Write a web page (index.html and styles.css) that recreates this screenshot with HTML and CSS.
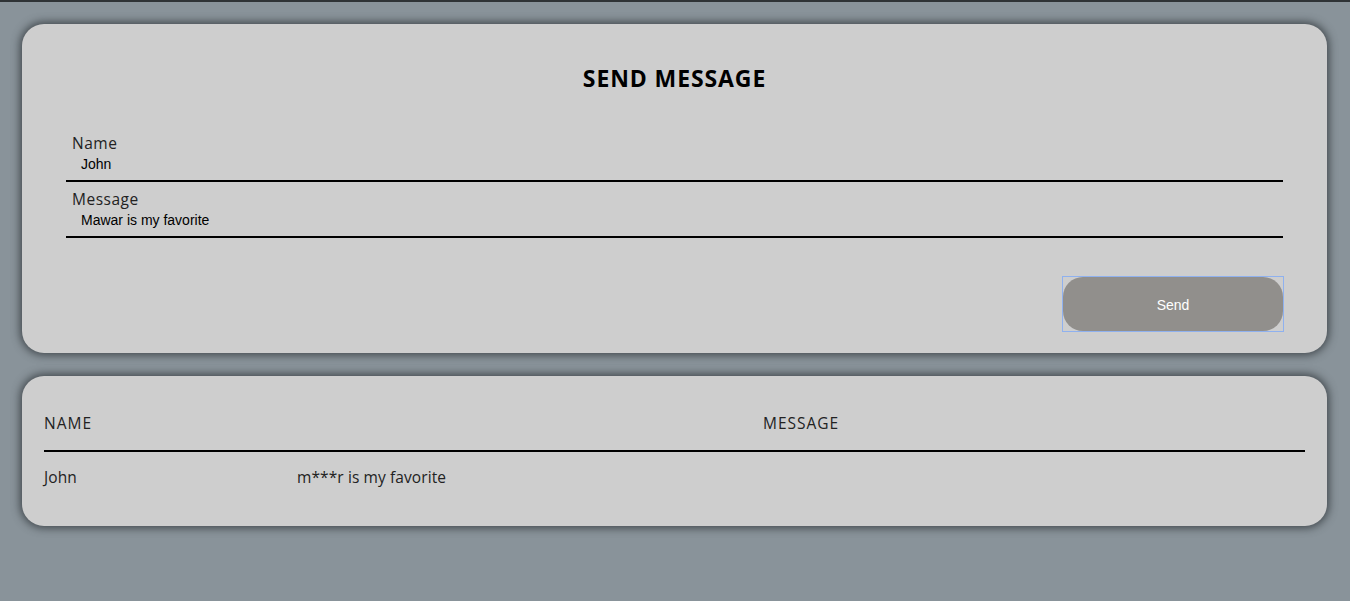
FILE: index.html
```html
<!DOCTYPE html>
<html>
<head>
<meta charset="utf-8">
<link rel="stylesheet" href="styles.css">
</head>
<body>
<div class="page">
  <section class="card form-card">
    <h1 class="title">SEND MESSAGE</h1>
    <div class="field">
      <label class="label">Name</label>
      <div class="value">John</div>
    </div>
    <div class="field">
      <label class="label">Message</label>
      <div class="value">Mawar is my favorite</div>
    </div>
    <div class="actions">
      <span class="focus-ring"><button class="send">Send</button></span>
    </div>
  </section>
  <section class="card list-card">
    <div class="thead">
      <div class="th">NAME</div>
      <div class="th">MESSAGE</div>
    </div>
    <div class="trow">
      <div class="td">John</div>
      <div class="td">m***r is my favorite</div>
    </div>
  </section>
</div>
</body>
</html>
```
FILE: styles.css
```css
html, body {
  margin: 0;
  padding: 0;
  height: 100%;
}
body {
  background: #89939a;
  border-top: 2px solid #2f3336;
  box-sizing: border-box;
  font-family: "Open Sans", "Liberation Sans", sans-serif;
  color: #111;
}
.page {
  padding: 22px 23px 0 22px;
  display: flex;
  flex-direction: column;
  gap: 23px;
}
.card {
  background: #cecece;
  border-radius: 22px;
  box-shadow: 0 0 8px 2px rgba(40, 45, 50, 0.75);
}
.form-card {
  padding: 40px 44px 21px 44px;
  height: 329px;
  box-sizing: border-box;
}
.title {
  margin: 0 0 36px 0;
  text-align: center;
  font-size: 23px;
  font-weight: 700;
  line-height: 28px;
  color: #000;
  letter-spacing: 0.9px;
}
.field {
  border-bottom: 2px solid #000;
  height: 54px;
  box-sizing: border-box;
  padding: 5px 6px 0 6px;
  display: flex;
  flex-direction: column;
}
.field + .field {
  height: 56px;
  padding-top: 7px;
}
.label {
  font-size: 15.5px;
  line-height: 20px;
  color: #222;
  letter-spacing: 0.5px;
}
.value {
  font-family: "Liberation Sans", Arial, sans-serif;
  font-size: 14px;
  line-height: 18px;
  padding-left: 9px;
  margin-top: 2px;
  color: #000;
}
.actions {
  display: flex;
  justify-content: flex-end;
  margin-top: 38px;
  margin-right: -1px;
}
.focus-ring {
  display: block;
  border: 1px solid #8fb1ef;
  line-height: 0;
}
.send {
  width: 220px;
  height: 54px;
  border: none;
  border-radius: 20px;
  background: #918f8c;
  color: #fff;
  font-family: "Liberation Sans", Arial, sans-serif;
  font-size: 14px;
  padding: 2px 0 0 0;
  outline: none;
}
.list-card {
  padding: 36px 22px 38px 22px;
  height: 150px;
  box-sizing: border-box;
}
.thead {
  display: grid;
  grid-template-columns: 719px 1fr;
  border-bottom: 2px solid #000;
  padding-bottom: 16px;
}
.th, .td {
  font-size: 15.5px;
  line-height: 22px;
  color: #222;
}
.th {
  letter-spacing: 1px;
}
.td {
  letter-spacing: 0.1px;
}
.trow {
  display: grid;
  grid-template-columns: 253px 1fr;
  padding-top: 14px;
}
```
